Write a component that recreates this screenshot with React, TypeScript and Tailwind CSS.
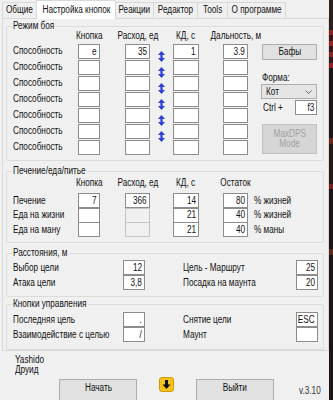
import React from "react";

const FONT = "font-['Liberation_Sans',Arial,sans-serif]";

function TL({ children }: { children: React.ReactNode }) {
  return <span className="inline-block whitespace-nowrap origin-left scale-x-[0.82]">{children}</span>;
}
function TC({ children }: { children: React.ReactNode }) {
  return <span className="inline-block whitespace-nowrap origin-center scale-x-[0.82]">{children}</span>;
}
function TR({ children }: { children: React.ReactNode }) {
  return <span className="inline-block whitespace-nowrap origin-right scale-x-[0.82]">{children}</span>;
}

function Box({ v = "", disabled = false }: { v?: string; disabled?: boolean }) {
  return (
    <div
      className={
        disabled
          ? "w-full h-[15px] border border-[#c4c4c4] bg-[#f0f0f0]"
          : "w-full h-[15px] border border-[#8c8c8c] bg-white flex items-center justify-end pr-[2px] leading-[12px] text-[#111]"
      }
    >
      {v ? <TR>{v}</TR> : null}
    </div>
  );
}

function UpDown() {
  return (
    <svg width="7" height="11" viewBox="0 0 7 11">
      <path d="M3.5 0 L7 4 L4.6 4 L4.6 7 L7 7 L3.5 11 L0 7 L2.4 7 L2.4 4 L0 4 Z" fill="#2c3ed6" />
    </svg>
  );
}

function Head({ t }: { t: string }) {
  return (
    <div className="flex justify-center whitespace-nowrap leading-[12px]">
      <TC>{t}</TC>
    </div>
  );
}

function Label({ t, pl = true }: { t: string; pl?: boolean }) {
  return (
    <div className={pl ? "flex items-center pl-[6px] whitespace-nowrap" : "flex items-center whitespace-nowrap"}>
      <TL>{t}</TL>
    </div>
  );
}

function Cell({ children }: { children?: React.ReactNode }) {
  return <div className="flex items-end">{children}</div>;
}

function Legend({ t, w }: { t: string; w: string }) {
  return (
    <legend className={`ml-[5px] px-[1px] leading-[12px] whitespace-nowrap ${w}`}>
      <TL>{t}</TL>
    </legend>
  );
}

function Tab({ t, w, sel = false, first = false }: { t: string; w: string; sel?: boolean; first?: boolean }) {
  const base = sel
    ? "relative z-10 h-[19px] mb-[-1px] bg-white border border-b-0 border-[#d9d9d9] pt-[3px]"
    : "h-[16px] bg-[#f0f0f0] border border-b-0 border-[#d9d9d9] pt-[1px]";
  return (
    <div className={`${base} ${w} ${first ? "" : "-ml-px"} flex justify-center leading-[12px] whitespace-nowrap`}>
      <TC>{t}</TC>
    </div>
  );
}

function Btn({ t }: { t: string }) {
  return (
    <div className="w-[78px] h-[22px] border border-[#adadad] bg-[#e1e1e1] flex justify-center pt-[2px] leading-[12px]">
      <TC>{t}</TC>
    </div>
  );
}

export default function App() {
  const rows1 = [
    ["e", "35", "1", "3.9"],
    ["", "", "", ""],
    ["", "", "", ""],
    ["", "", "", ""],
    ["", "", "", ""],
    ["", "", "", ""],
    ["", "", "", ""],
  ];
  const rows2: [string, string, string, string, boolean, string, string][] = [
    ["Печение", "7", "366", "14", false, "80", "% жизней"],
    ["Еда на жизни", "", "", "21", true, "40", "% жизней"],
    ["Еда на ману", "", "", "21", true, "40", "% маны"],
  ];
  return (
    <div className={`${FONT} text-[10px] leading-[12px] text-[#111] w-[333px] h-[400px] overflow-hidden flex bg-[#f0f0f0]`}>
      <div className="w-[329px] flex flex-col">
        {/* tabs */}
        <div className="h-[18px] flex items-end pl-[2px]">
          <Tab t="Общие" w="w-[35px]" first />
          <Tab t="Настройка кнопок" w="w-[80px]" sel />
          <Tab t="Реакции" w="w-[39px]" />
          <Tab t="Редактор" w="w-[45px]" />
          <Tab t="Tools" w="w-[31px]" />
          <Tab t="О программе" w="w-[59px]" />
        </div>
        {/* tab page */}
        <div className="ml-[2px] w-[327px] h-[335px] border border-[#d9d9d9] bg-[#f0f0f0] pl-[3px] pr-[4px] pt-[1px] flex flex-col">
          {/* group 1 */}
          <fieldset className="border border-[#dcdcdc] rounded-[2px] h-[141px]">
            <Legend t="Режим боя" w="w-[43px]" />
            <div className="flex -mt-[2px]">
              <div className="grid grid-cols-[71px_22px_25px_25px_23px_26px_24px_25px] grid-rows-[13px_repeat(7,16px)]">
                <div />
                <Head t="Кнопка" />
                <div />
                <Head t="Расход, ед" />
                <div />
                <Head t="КД, с" />
                <div />
                <Head t="Дальность, м" />
                {rows1.map((r, i) => (
                  <React.Fragment key={i}>
                    <Label t="Способность" />
                    <Cell><Box v={r[0]} /></Cell>
                    <div />
                    <Cell><Box v={r[1]} /></Cell>
                    <div className="flex justify-center pt-[8px]">{i < 6 ? <UpDown /> : null}</div>
                    <Cell><Box v={r[2]} /></Cell>
                    <div />
                    <Cell><Box v={r[3]} /></Cell>
                  </React.Fragment>
                ))}
              </div>
              <div className="ml-[14px] w-[55px] flex flex-col pt-[14px]">
                <div className="h-[16px] border border-[#adadad] bg-[#e1e1e1] flex items-center justify-center">
                  <TC>Бафы</TC>
                </div>
                <div className="mt-[12px] h-[12px]">
                  <TL>Форма:</TL>
                </div>
                <div className="-ml-px w-[56px] h-[15px] border border-[#adadad] bg-[#e5e5e5] flex items-center justify-between pl-[4px] pr-[4px]">
                  <TL>Кот</TL>
                  <svg width="7" height="4" viewBox="0 0 7 4">
                    <path d="M0.5 0.5 L3.5 3.5 L6.5 0.5" fill="none" stroke="#666" strokeWidth="1" />
                  </svg>
                </div>
                <div className="mt-[1px] h-[15px] flex items-center justify-between">
                  <span className="pl-[1px]">
                    <TL>Ctrl +</TL>
                  </span>
                  <div className="w-[22px]">
                    <Box v="f3" />
                  </div>
                </div>
                <div className="mt-[9px] h-[30px] border border-[#c2c2c2] bg-[#d6d6d6] text-[#a0a0a0] flex flex-col items-center justify-center leading-[10px]">
                  <TC>MaxDPS</TC>
                  <TC>Mode</TC>
                </div>
              </div>
            </div>
          </fieldset>

          {/* group 2 */}
          <fieldset className="mt-[4px] border border-[#dcdcdc] rounded-[2px] h-[78px]">
            <Legend t="Печение/еда/питье" w="w-[75px]" />
            <div className="grid grid-cols-[71px_22px_25px_25px_23px_26px_24px_25px_auto] grid-rows-[16px_15px_14px_15px]">
              <div />
              <Head t="Кнопка" />
              <div />
              <Head t="Расход, ед" />
              <div />
              <Head t="КД, с" />
              <div />
              <Head t="Остаток" />
              <div />
              {rows2.map((r, i) => (
                <React.Fragment key={i}>
                  <Label t={r[0]} />
                  <div className="flex items-center"><Box v={r[1]} /></div>
                  <div />
                  <div className="flex items-center"><Box v={r[2]} disabled={r[4]} /></div>
                  <div />
                  <div className="flex items-center"><Box v={r[3]} /></div>
                  <div />
                  <div className="flex items-center"><Box v={r[5]} /></div>
                  <div className="flex items-center pl-[6px] whitespace-nowrap">
                    <TL>{r[6]}</TL>
                  </div>
                </React.Fragment>
              ))}
            </div>
          </fieldset>

          {/* group 3 */}
          <fieldset className="mt-[4px] border border-[#dcdcdc] rounded-[2px] h-[50px]">
            <Legend t="Расстояния, м" w="w-[57px]" />
            <div className="mt-[1px] grid grid-cols-[116px_22px_38px_113px_22px] grid-rows-[15px_15px]">
              <Label t="Выбор цели" />
              <Cell><Box v="12" /></Cell>
              <div />
              <Label t="Цель - Маршрут" pl={false} />
              <Cell><Box v="25" /></Cell>
              <Label t="Атака цели" />
              <Cell><Box v="3,8" /></Cell>
              <div />
              <Label t="Посадка на маунта" pl={false} />
              <Cell><Box v="20" /></Cell>
            </div>
          </fieldset>

          {/* group 4 */}
          <fieldset className="mt-[1px] border border-[#dcdcdc] rounded-[2px] h-[52px]">
            <Legend t="Кнопки управления" w="w-[76px]" />
            <div className="mt-[2px] grid grid-cols-[116px_22px_38px_113px_22px] grid-rows-[15px_15px]">
              <Label t="Последняя цель" />
              <Cell><Box v="." /></Cell>
              <div />
              <Label t="Снятие цели" pl={false} />
              <Cell><Box v="ESC" /></Cell>
              <Label t="Взаимодействие с целью" />
              <Cell><Box v="/" /></Cell>
              <div />
              <Label t="Маунт" pl={false} />
              <Cell><Box v="" /></Cell>
            </div>
          </fieldset>
        </div>

        {/* bottom */}
        <div className="pl-[15px] pt-[4px] leading-[10px]">
          <div><TL>Yashido</TL></div>
          <div><TL>Друид</TL></div>
        </div>
        <div className="flex items-start mt-[4px]">
          <div className="ml-[59px]">
            <Btn t="Начать" />
          </div>
          <svg className="ml-[22px] -mt-[2px]" width="15" height="15" viewBox="0 0 15 15">
            <rect x="0.5" y="0.5" width="14" height="14" rx="2.5" fill="#f6c21c" stroke="#d19a00" />
            <rect x="6" y="3" width="3" height="5" fill="#111" />
            <path d="M3.5 7.5 L11.5 7.5 L7.5 12 Z" fill="#111" />
          </svg>
          <div className="ml-[22px]">
            <Btn t="Выйти" />
          </div>
          <div className="ml-[25px] mt-[6px] text-[#333]">
            <TL>v.3.10</TL>
          </div>
        </div>
      </div>
      {/* background strip at right edge */}
      <div className="w-[4px] h-[400px] bg-[#1d1616] flex flex-col">
        <div className="h-[30px] bg-[#2a2020]" />
        <div className="h-[5px] bg-[#8c2222]" />
        <div className="h-[6px] bg-[#3a1818]" />
        <div className="h-[5px] bg-[#9a2424]" />
        <div className="h-[6px] bg-[#3a1818]" />
        <div className="h-[5px] bg-[#8c2222]" />
        <div className="h-[6px] bg-[#2e1a1a]" />
        <div className="h-[5px] bg-[#922020]" />
        <div className="h-[70px] bg-[#1d1616]" />
        <div className="h-[6px] bg-[#6a2a1a]" />
        <div className="h-[40px] bg-[#241a1a]" />
        <div className="h-[5px] bg-[#7a2020]" />
        <div className="h-[60px] bg-[#1d1616]" />
        <div className="h-[6px] bg-[#5a2a1a]" />
      </div>
    </div>
  );
}
